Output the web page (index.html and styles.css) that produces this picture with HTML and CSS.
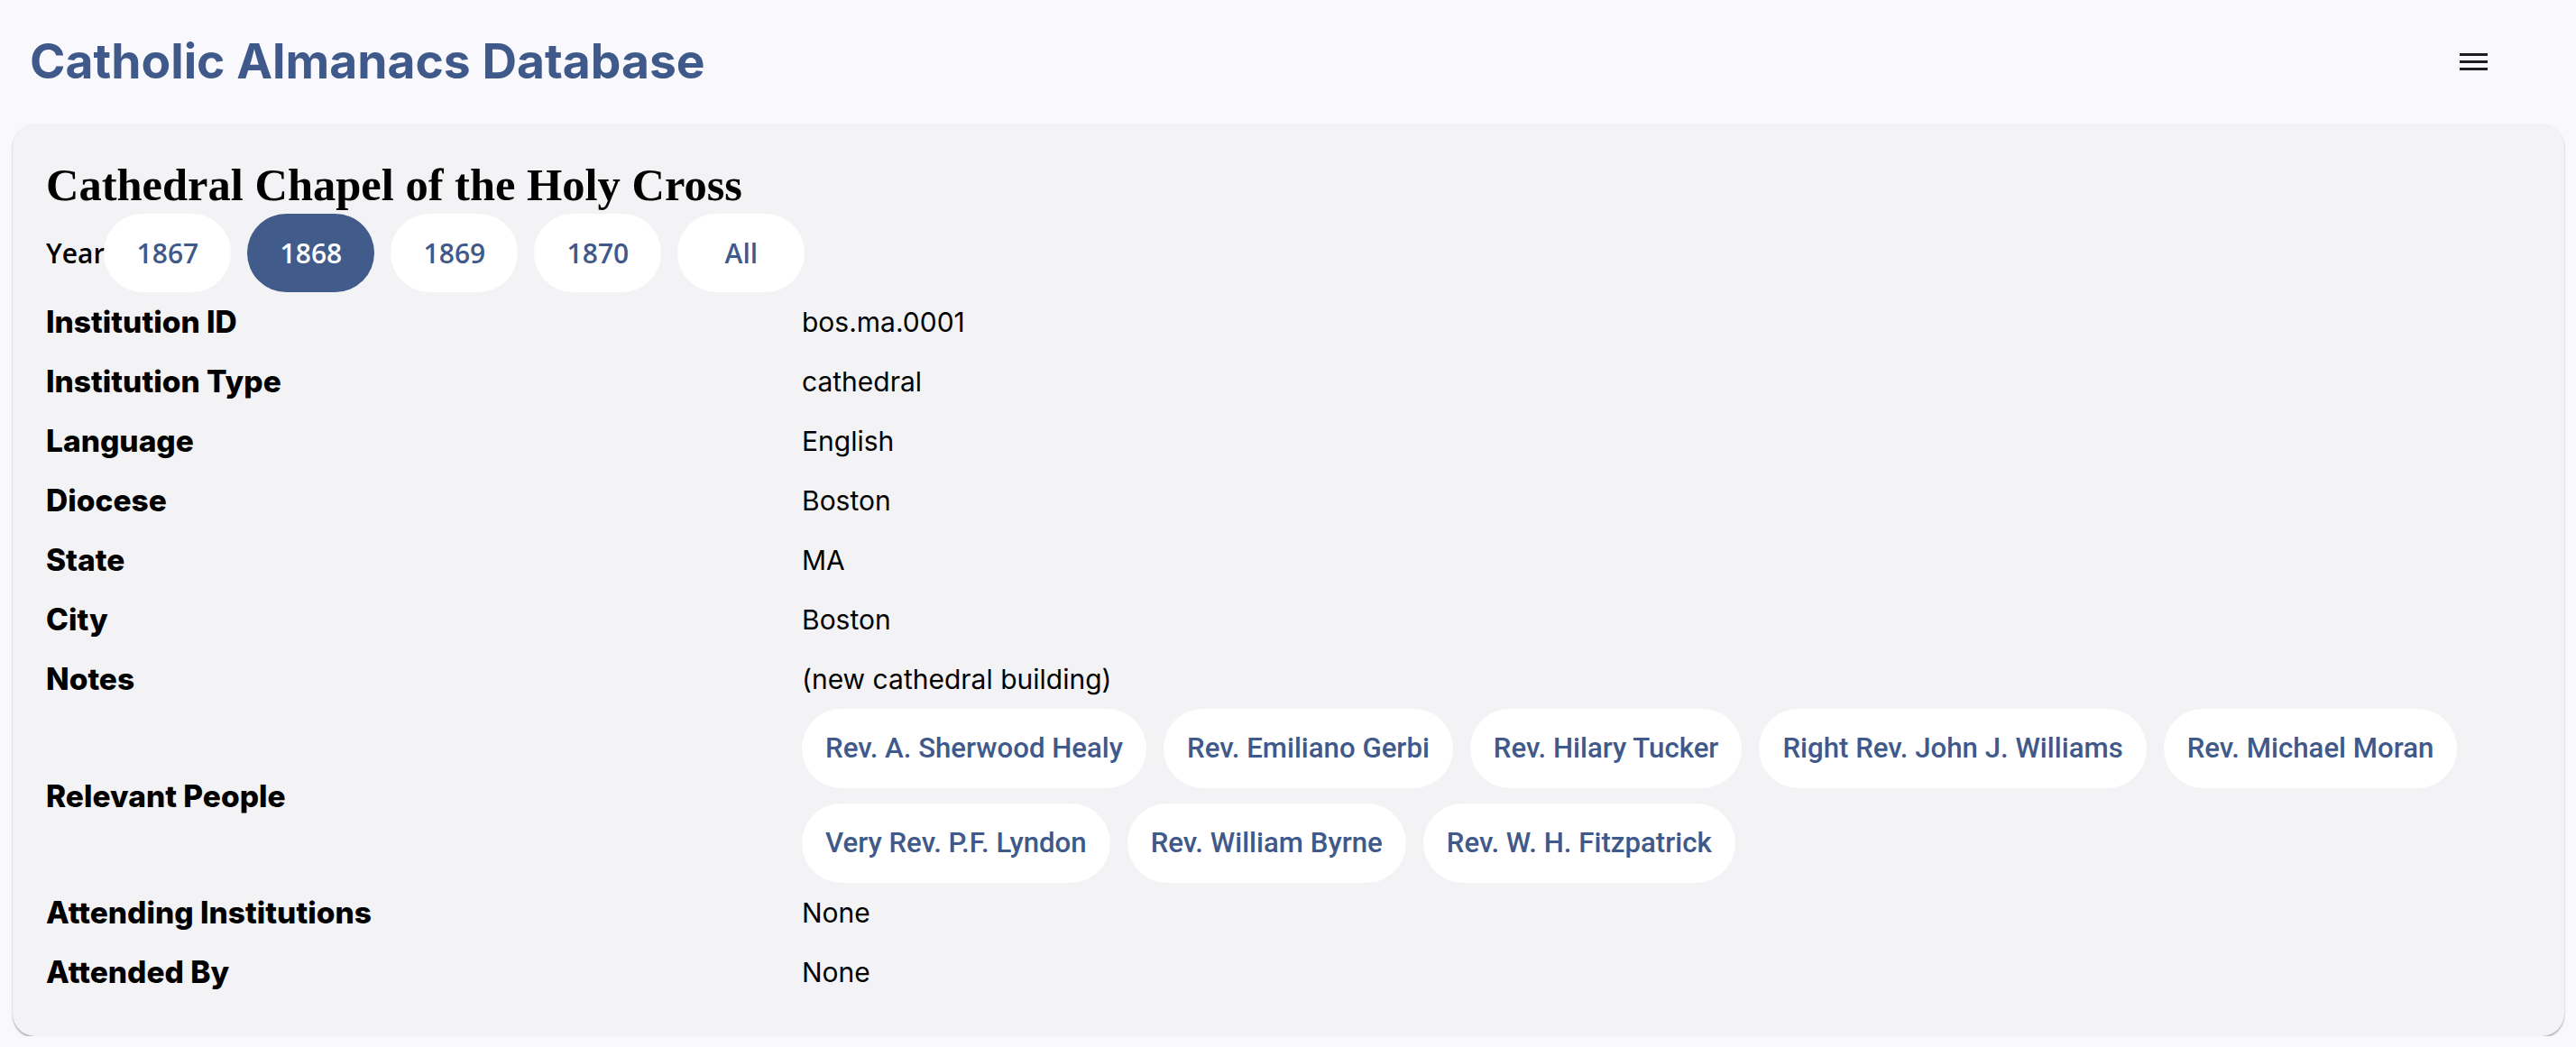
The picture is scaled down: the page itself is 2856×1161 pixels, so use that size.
FILE: index.html
```html
<!DOCTYPE html>
<html lang="en">
<head>
<meta charset="utf-8">
<title>Catholic Almanacs Database</title>
<link rel="stylesheet" href="styles.css">
</head>
<body>
<header class="topbar">
  <h1 class="brand">Catholic Almanacs Database</h1>
  <button class="menu-btn" aria-label="Menu">
    <svg width="31" height="20" viewBox="0 0 31 20"><rect x="0" y="1" width="31" height="3" fill="#1c1b1f"/><rect x="0" y="9" width="31" height="3" fill="#1c1b1f"/><rect x="0" y="17" width="31" height="3" fill="#1c1b1f"/></svg>
  </button>
</header>
<main class="main">
  <section class="card">
    <h2 class="inst-title">Cathedral Chapel of the Holy Cross</h2>
    <div class="year-row">
      <span class="year-label">Year</span>
      <div class="year-pills">
        <button class="year-pill">1867</button>
        <button class="year-pill active">1868</button>
        <button class="year-pill">1869</button>
        <button class="year-pill">1870</button>
        <button class="year-pill">All</button>
      </div>
    </div>
    <div class="details">
      <div class="label">Institution ID</div><div class="value">bos.ma.0001</div>
      <div class="label">Institution Type</div><div class="value">cathedral</div>
      <div class="label">Language</div><div class="value">English</div>
      <div class="label">Diocese</div><div class="value">Boston</div>
      <div class="label">State</div><div class="value">MA</div>
      <div class="label">City</div><div class="value">Boston</div>
      <div class="label">Notes</div><div class="value">(new cathedral building)</div>
      <div class="label">Relevant People</div>
      <div class="value people">
        <a class="person">Rev. A. Sherwood Healy</a>
        <a class="person">Rev. Emiliano Gerbi</a>
        <a class="person">Rev. Hilary Tucker</a>
        <a class="person">Right Rev. John J. Williams</a>
        <a class="person">Rev. Michael Moran</a>
        <a class="person">Very Rev. P.F. Lyndon</a>
        <a class="person">Rev. William Byrne</a>
        <a class="person">Rev. W. H. Fitzpatrick</a>
      </div>
      <div class="label">Attending Institutions</div><div class="value">None</div>
      <div class="label">Attended By</div><div class="value">None</div>
    </div>
  </section>
</main>
</body>
</html>
```

FILE: styles.css
```css
* { box-sizing: border-box; }

body {
  margin: 0;
  background: #f9f9fd;
  font-family: "Inter", "Liberation Sans", sans-serif;
  color: #000;
}

.topbar {
  height: 138px;
  display: flex;
  align-items: center;
  justify-content: space-between;
  padding: 0 98px 0 33px;
}

.brand {
  margin: 0;
  font-family: "Inter", sans-serif;
  font-weight: 700;
  font-size: 53.4px;
  line-height: 1;
  color: #3f5a8a;
  padding-bottom: 2px;
}

.menu-btn {
  border: 0;
  background: transparent;
  padding: 0;
  width: 31px;
  height: 20px;
  display: flex;
  margin-bottom: 2px;
}

.main {
  padding: 0 13px 0 14px;
}

.card {
  background: #f3f3f5;
  border-radius: 25px;
  padding: 36px 37px 38px;
  box-shadow: 0 2px 2px rgba(0, 0, 0, 0.28), 0 0 2px rgba(0, 0, 0, 0.08);
}

.inst-title {
  margin: 0;
  font-family: "Liberation Serif", serif;
  font-weight: 700;
  font-size: 50.5px;
  line-height: 63px;
  color: #000;
}

.year-row {
  display: flex;
  align-items: center;
  gap: 0;
  height: 87px;
}

.year-label {
  font-family: "Open Sans", sans-serif;
  font-weight: 600;
  font-size: 30px;
  margin-right: -1px;
}

.year-pills {
  display: flex;
  gap: 18px;
}

.year-pill {
  width: 141px;
  height: 87px;
  border: 0;
  border-radius: 44px;
  background: #fff;
  color: #3f5a8a;
  font-family: "Open Sans", sans-serif;
  font-weight: 600;
  font-size: 30px;
  padding: 0;
}

.year-pill.active {
  background: #415b8b;
  color: #fff;
}

.details {
  display: grid;
  grid-template-columns: 838px 1fr;
  align-items: center;
}

.label {
  font-weight: 800;
  font-size: 33.5px;
  line-height: 36px;
  padding: 15px 0;
}

.value {
  font-weight: 400;
  font-size: 30px;
  line-height: 36px;
  padding: 15px 0;
}

.value.people {
  display: flex;
  flex-wrap: wrap;
  gap: 17px 19px;
  padding: 0;
}

.person {
  display: flex;
  align-items: center;
  height: 88px;
  padding: 0 26px;
  border-radius: 44px;
  background: #fff;
  color: #3f5a8a;
  font-family: "Roboto", sans-serif;
  font-weight: 500;
  font-size: 31.2px;
}
```
